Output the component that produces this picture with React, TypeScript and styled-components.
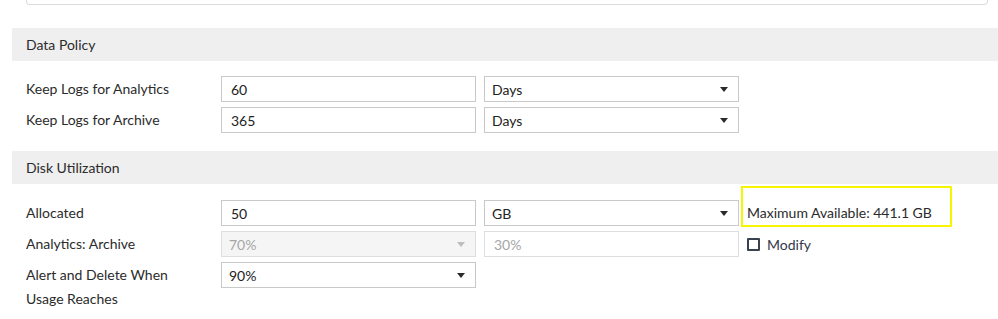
import styled, { createGlobalStyle } from 'styled-components';

const GlobalStyle = createGlobalStyle`
  body {
    margin: 0;
    background: #ffffff;
    font-family: Lato, "Open Sans", "Liberation Sans", sans-serif;
    color: #2b2b2b;
  }
`;

const Page = styled.div`
  width: 998px;
  height: 319px;
  overflow: hidden;
  padding-left: 12px;
  box-sizing: border-box;
  font-size: 14px;
`;

const TopPanel = styled.div`
  height: 4px;
  margin: 0 10px 0 14px;
  border: 1px solid #dcdcdc;
  border-top: none;
  border-radius: 0 0 4px 4px;
`;

const SectionHeader = styled.div`
  margin-top: 23px;
  height: 33px;
  line-height: 33px;
  padding-left: 14px;
  background: #efefef;
  color: #2b2b2b;
`;

const SectionBody = styled.div<{ $top: number; $bottom: number }>`
  display: flex;
  flex-direction: column;
  gap: 5px;
  padding: ${(p) => p.$top}px 0 ${(p) => p.$bottom}px 14px;

  & + ${SectionHeader} {
    margin-top: 0;
  }
`;

const Row = styled.div`
  display: flex;
  align-items: flex-start;
  gap: 8px;
`;

const Label = styled.div`
  box-sizing: border-box;
  flex: 0 0 187px;
  padding-right: 17px;
  line-height: 24px;
  padding-top: 1px;
`;

const Field = styled.div<{ $disabled?: boolean; $muted?: boolean; $select?: boolean }>`
  box-sizing: border-box;
  flex: 0 0 255px;
  height: 26px;
  display: flex;
  align-items: center;
  justify-content: space-between;
  padding: 0 10px 0 ${(p) => (p.$select ? 7 : 9)}px;
  border: 1px solid ${(p) => (p.$disabled || p.$muted ? '#dedede' : '#c9c9c9')};
  background: ${(p) => (p.$disabled ? '#f5f5f5' : '#ffffff')};
  color: ${(p) => (p.$disabled || p.$muted ? '#a6a6a6' : '#222222')};
`;

const Caret = styled.span<{ $disabled?: boolean }>`
  width: 0;
  height: 0;
  border-left: 4px solid transparent;
  border-right: 4px solid transparent;
  border-top: 5px solid ${(p) => (p.$disabled ? '#bdbdbd' : '#2b2b2b')};
`;

const Note = styled.div`
  position: relative;
  line-height: 26px;
  padding-right: 20px;
  color: #2b2b2b;

  &::after {
    content: '';
    position: absolute;
    top: -14px;
    bottom: -1px;
    left: -6px;
    right: 0;
    border: 2px solid #f6f600;
  }
`;

const CheckRow = styled.label`
  display: flex;
  align-items: center;
  gap: 7px;
  height: 26px;
  color: #333a48;
`;

const CheckBox = styled.span`
  box-sizing: border-box;
  width: 13px;
  height: 13px;
  border: 2px solid #3a4252;
  border-radius: 1px;
`;

type SelectProps = { value: string; disabled?: boolean };

function Select({ value, disabled }: SelectProps) {
  return (
    <Field $select $disabled={disabled}>
      <span>{value}</span>
      <Caret $disabled={disabled} />
    </Field>
  );
}

export default function App(): JSX.Element {
  return (
    <Page>
      <GlobalStyle />
      <TopPanel />
      <SectionHeader>Data Policy</SectionHeader>
      <SectionBody $top={15} $bottom={18}>
        <Row>
          <Label>Keep Logs for Analytics</Label>
          <Field>60</Field>
          <Select value="Days" />
        </Row>
        <Row>
          <Label>Keep Logs for Archive</Label>
          <Field>365</Field>
          <Select value="Days" />
        </Row>
      </SectionBody>
      <SectionHeader>Disk Utilization</SectionHeader>
      <SectionBody $top={16} $bottom={0}>
        <Row>
          <Label>Allocated</Label>
          <Field>50</Field>
          <Select value="GB" />
          <Note>Maximum Available: 441.1 GB</Note>
        </Row>
        <Row>
          <Label>Analytics: Archive</Label>
          <Select value="70%" disabled />
          <Field $muted>30%</Field>
          <CheckRow>
            <CheckBox />
            Modify
          </CheckRow>
        </Row>
        <Row>
          <Label>Alert and Delete When Usage Reaches</Label>
          <Select value="90%" />
        </Row>
      </SectionBody>
    </Page>
  );
}
